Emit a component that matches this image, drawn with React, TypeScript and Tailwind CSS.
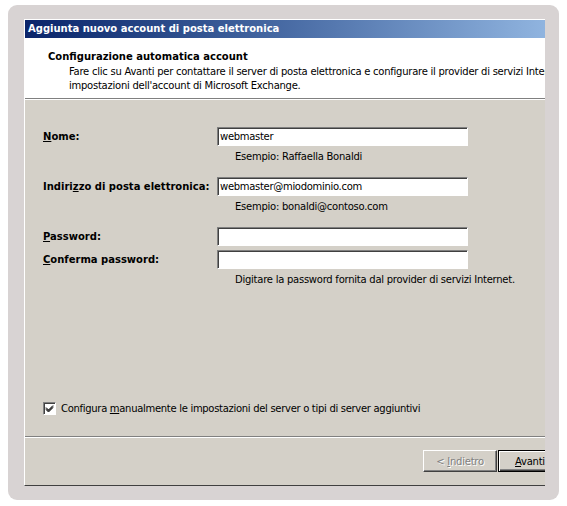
import type { ReactNode } from 'react'

const font = "font-['DejaVu_Sans',Tahoma,sans-serif]"

function Field({ value = '' }: { value?: string }) {
  return (
    <div className="h-[19px] w-[251px] border border-t-[#808080] border-l-[#808080] border-b-white border-r-white bg-white shadow-[inset_1px_1px_0_#404040] pl-[2px] text-[10px] tracking-[-0.3px] leading-[17px] text-black whitespace-nowrap overflow-hidden">
      {value}
    </div>
  )
}

function Row({ label, value, hint, mt }: { label: ReactNode; value?: string; hint?: string; mt: string }) {
  return (
    <div className={mt}>
      <div className="flex items-center">
        <div className="w-[174px] text-[10px] font-bold">{label}</div>
        <Field value={value} />
      </div>
      {hint && <div className="mt-[4px] pl-[192px] text-[10px] tracking-[-0.25px] leading-[13px]">{hint}</div>}
    </div>
  )
}

export default function App() {
  return (
    <div className={`w-[567px] h-[506px] bg-white pt-[5px] pl-[8px] text-black ${font}`}>
      <div className="w-[551px] h-[495px] rounded-[9px] bg-[#d8d3d3] pt-[14px] pl-[16px]">
        {/* finestra di dialogo, tagliata a destra come nello screenshot */}
        <div className="w-[521px] h-[467px] overflow-hidden bg-[#d4d0c8] border-t border-l border-white border-b border-b-[#404040] flex flex-col">
          <div className="h-[18px] shrink-0 bg-linear-to-r from-[#0a246a] to-[#90b4df] pl-[3px] text-[10px] font-bold leading-[18px] text-white whitespace-nowrap">
            Aggiunta nuovo account di posta elettronica
          </div>

          <div className="h-[60px] shrink-0 bg-white pt-[12px] pl-[23px] whitespace-nowrap">
            <div className="text-[10px] font-bold leading-[13px]">Configurazione automatica account</div>
            <div className="pl-[21px] pt-[2px] text-[10px] tracking-[-0.25px] leading-[14px]">
              <div>Fare clic su Avanti per contattare il server di posta elettronica e configurare il provider di servizi Internet</div>
              <div>impostazioni dell'account di Microsoft Exchange.</div>
            </div>
          </div>
          <div className="h-px shrink-0 bg-[#808080]" />
          <div className="h-px shrink-0 bg-white" />

          <div className="flex-1 flex flex-col pl-[18px] whitespace-nowrap">
            <Row mt="mt-[27px]" label={<><u>N</u>ome:</>} value="webmaster" hint="Esempio: Raffaella Bonaldi" />
            <Row mt="mt-[14px]" label={<>Indiri<u>z</u>zo di posta elettronica:</>} value="webmaster@miodominio.com" hint="Esempio: bonaldi@contoso.com" />
            <Row mt="mt-[14px]" label={<><u>P</u>assword:</>} />
            <Row mt="mt-[4px]" label={<><u>C</u>onferma password:</>} hint="Digitare la password fornita dal provider di servizi Internet." />

            <div className="mt-auto mb-[21px] flex items-center gap-[5px]">
              <div className="h-[13px] w-[13px] border border-t-[#808080] border-l-[#808080] border-b-white border-r-white bg-white shadow-[inset_1px_1px_0_#404040] flex items-center justify-center">
                <svg width="9" height="9" viewBox="0 0 9 9">
                  <path d="M1 3.5 L3.5 6 L8 1.5 M1 4.5 L3.5 7 L8 2.5 M1 5.5 L3.5 8 L8 3.5" stroke="#000" strokeWidth="1" fill="none" />
                </svg>
              </div>
              <span className="text-[10px] tracking-[-0.3px] leading-[13px]">
                Configura <u>m</u>anualmente le impostazioni del server o tipi di server aggiuntivi
              </span>
            </div>
          </div>

          <div className="h-px shrink-0 bg-[#808080]" />
          <div className="h-px shrink-0 bg-white" />

          <div className="h-[47px] shrink-0 flex items-start pt-[12px] pl-[398px]">
            <div className="h-[22px] w-[74px] shrink-0 border border-t-white border-l-white border-r-[#404040] border-b-[#404040] shadow-[inset_-1px_-1px_0_#808080] flex items-center justify-center text-[10px] tracking-[-0.25px] text-[#808080] [text-shadow:1px_1px_0_#ffffff]">
              &lt; <u className="ml-[3px]">I</u>ndietro
            </div>
            <div className="ml-px h-[22px] w-[75px] shrink-0 border border-black shadow-[inset_1px_1px_0_#ffffff,inset_-1px_-1px_0_#404040,inset_-2px_-2px_0_#808080] flex items-center justify-center text-[10px] tracking-[-0.25px]">
              <span><u>A</u>vanti &gt;</span>
            </div>
          </div>
        </div>
      </div>
    </div>
  )
}
